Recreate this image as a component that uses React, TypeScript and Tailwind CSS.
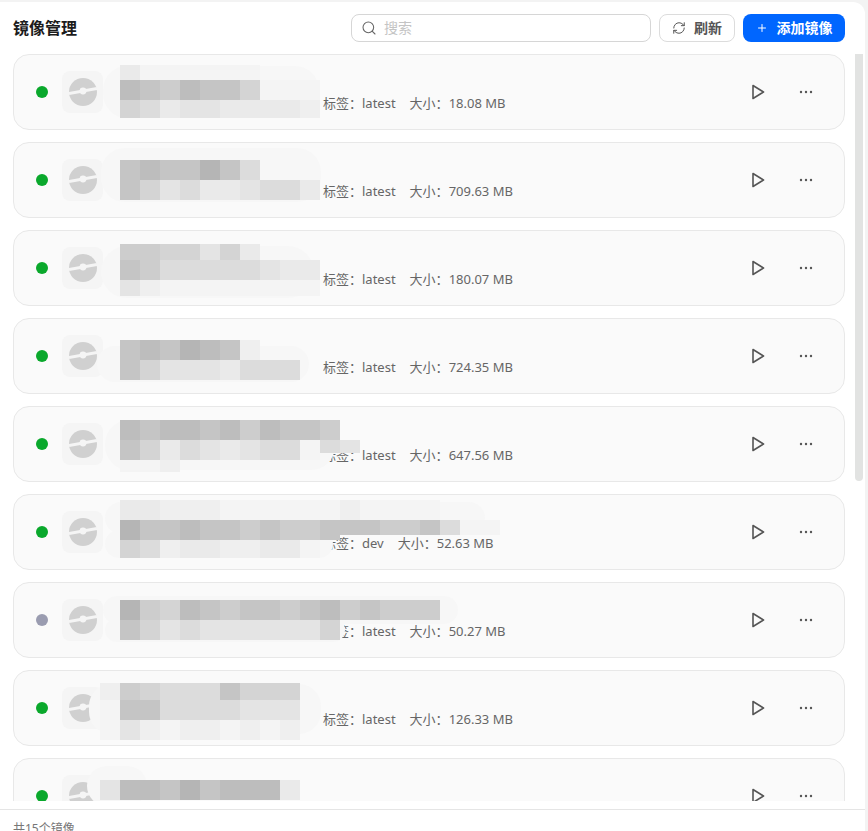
import { Plus, RefreshCw, Search } from 'lucide-react';

const FONT = 'font-["Noto_Sans","Noto_Sans_CJK_SC",sans-serif]';

// mosaic shades, one letter per 20px block
const SHADE: Record<string, string> = {
  a: 'bg-[#b5b5b5]',
  b: 'bg-[#bdbdbd]',
  c: 'bg-[#c5c5c5]',
  d: 'bg-[#cdcdcd]',
  e: 'bg-[#d4d4d4]',
  f: 'bg-[#dcdcdc]',
  g: 'bg-[#e4e4e4]',
  h: 'bg-[#eaeaea]',
  i: 'bg-[#efefef]',
  j: 'bg-[#f4f4f4]',
};

type Strip = { h: string; top: string; left: string; cells: string };

type Row = {
  tag?: string;
  size?: string;
  off?: boolean;
  smudges: string[];
  strips: Strip[];
};

const strip = (top: string, left: string, h: string, cells: string): Strip => ({ top, left, h, cells });

const ROWS: Row[] = [
  {
    tag: 'latest', size: '18.08 MB',
    smudges: ['left-[89px] top-[11px] w-[216px] h-[52px] rounded-[24px]'],
    strips: [
      strip('top-[10px]', 'left-[106px]', 'h-[15px]', 'hjjjjjj'),
      strip('top-[25px]', 'left-[106px]', 'h-5', 'bcdbccejjj'),
      strip('top-[45px]', 'left-[106px]', 'h-[18px]', 'efhgghhhhi'),
    ],
  },
  {
    tag: 'latest', size: '709.63 MB',
    smudges: ['left-[87px] top-[5px] w-[220px] h-[54px] rounded-[24px]'],
    strips: [
      strip('top-[17px]', 'left-[106px]', 'h-5', 'cbccacf'),
      strip('top-[37px]', 'left-[106px]', 'h-5', 'cegfhhgffh'),
    ],
  },
  {
    tag: 'latest', size: '180.07 MB',
    smudges: ['left-[87px] top-[15px] w-[213px] h-[52px] rounded-[26px]'],
    strips: [
      strip('top-[13px]', 'left-[106px]', 'h-4', 'ddeegeh'),
      strip('top-[29px]', 'left-[106px]', 'h-5', 'cdfffffghh'),
      strip('top-[49px]', 'left-[106px]', 'h-[16px]', 'gijjjjjjjj'),
    ],
  },
  {
    tag: 'latest', size: '724.35 MB',
    smudges: ['left-[83px] top-[27px] w-[212px] h-[36px] rounded-[18px]'],
    strips: [
      strip('top-[21px]', 'left-[106px]', 'h-5', 'cbcabci'),
      strip('top-[41px]', 'left-[106px]', 'h-5', 'ceggghfff'),
    ],
  },
  {
    tag: 'latest', size: '647.56 MB',
    smudges: ['left-[91px] top-[13px] w-[230px] h-[50px] rounded-[24px]'],
    strips: [
      strip('top-[13px]', 'left-[106px]', 'h-5', 'bcbbcbdbccd'),
      strip('top-[33px]', 'left-[106px]', 'h-5', 'cehfghgffj'),
      strip('top-[33px]', 'left-[306px]', 'h-[13px]', 'fg'),
      strip('top-[53px]', 'left-[106px]', 'h-[12px]', 'jji'),
    ],
  },
  {
    tag: 'dev', size: '52.63 MB',
    smudges: [
      'left-[91px] top-[7px] w-[380px] h-[32px] rounded-[16px]',
      'left-[91px] top-[35px] w-[228px] h-[28px] rounded-[14px]',
    ],
    strips: [
      strip('top-[5px]', 'left-[106px]', 'h-5', 'hhiiijjjjjjijjjj'),
      strip('top-[25px]', 'left-[106px]', 'h-5', 'accbccdcddc'),
      strip('top-[25px]', 'left-[326px]', 'h-[15px]', 'ccddcfjj'),
      strip('top-[45px]', 'left-[106px]', 'h-[18px]', 'efihhiihhj'),
    ],
  },
  {
    tag: 'latest', size: '50.27 MB', off: true,
    smudges: [
      'left-[89px] top-[13px] w-[355px] h-[28px] rounded-[14px]',
      'left-[91px] top-[35px] w-[240px] h-[24px] rounded-[12px]',
    ],
    strips: [
      strip('top-[17px]', 'left-[106px]', 'h-5', 'adebcdccdcbdcddd'),
      strip('top-[37px]', 'left-[106px]', 'h-5', 'cegfgggggge'),
    ],
  },
  {
    tag: 'latest', size: '126.33 MB',
    smudges: ['left-[75px] top-[13px] w-[232px] h-[50px] rounded-[22px]'],
    strips: [
      strip('top-[12px]', 'left-[86px]', 'h-[17px]', 'idefffceee'),
      strip('top-[29px]', 'left-[86px]', 'h-5', 'jccffffggg'),
      strip('top-[49px]', 'left-[86px]', 'h-5', 'jgijiijiji'),
    ],
  },
  {
    smudges: ['left-[73px] top-[7px] w-[60px] h-[40px] rounded-[24px]'],
    strips: [strip('top-[21px]', 'left-[86px]', 'h-5', 'gbbcacbbbh')],
  },
];

function Disc() {
  return (
    <svg width="28" height="28" viewBox="0 0 28 28">
      <circle cx="14" cy="14" r="14" fill="#d0d0d0" />
      <path d="M0 15.5 28 10.5" stroke="#f5f5f5" strokeWidth="2.8" />
      <circle cx="14" cy="13" r="3.4" fill="#f5f5f5" />
    </svg>
  );
}

function PlayIcon() {
  return (
    <svg width="14" height="16" viewBox="0 0 14 16" fill="none" stroke="#555" strokeWidth="1.6" strokeLinejoin="round">
      <path d="M2 1.5 12.5 8 2 14.5Z" />
    </svg>
  );
}

function DotsIcon() {
  return (
    <svg width="14" height="4" viewBox="0 0 14 4" fill="#555">
      <circle cx="2" cy="2" r="1.2" />
      <circle cx="7" cy="2" r="1.2" />
      <circle cx="12" cy="2" r="1.2" />
    </svg>
  );
}

function ImageCard({ row }: { row: Row }) {
  return (
    <div className="relative flex h-[76px] shrink-0 items-center rounded-2xl border border-[#e8e8e8] bg-[#fafafa] pl-[22px] pr-[31px]">
      <span className={`h-3 w-3 rounded-full ${row.off ? 'bg-[#9a9cb0]' : 'bg-[#0aa82c]'}`} />
      <div className="ml-[14px] flex h-[42px] w-[41px] items-center justify-center rounded-lg bg-[#f5f5f5]">
        <Disc />
      </div>
      <div className="ml-[220px] mt-6 flex flex-1 gap-[14px] text-[13px] text-[#666]">
        {row.tag && <span>标签：{row.tag}</span>}
        {row.size && <span>大小：{row.size}</span>}
      </div>
      <div className="flex items-center gap-[34px]">
        <PlayIcon />
        <DotsIcon />
      </div>
      {/* pixelated cover over the image name */}
      {row.smudges.map((cls, i) => (
        <div key={i} className={`absolute bg-[#f7f7f7] ${cls}`} />
      ))}
      {row.strips.map((s, i) => (
        <div key={i} className={`absolute flex ${s.top} ${s.left}`}>
          {s.cells.split('').map((c, j) => (
            <div key={j} className={`w-5 ${s.h} ${SHADE[c]}`} />
          ))}
        </div>
      ))}
    </div>
  );
}

export default function App() {
  return (
    <div className={`flex h-[831px] w-[868px] flex-col overflow-hidden bg-[#f3f3f3] pt-[2px] pr-[3px] ${FONT}`}>
      <div className="flex min-h-0 flex-1 flex-col rounded-tr-xl bg-white">
        <header className="flex h-[52px] shrink-0 items-start pl-[13px] pr-[20px] pt-[12px]">
          <h1 className="flex h-7 items-center text-base font-bold text-[#1c1c1c]">镜像管理</h1>
          <div className="ml-auto flex h-7 gap-2">
            <div className="flex w-[300px] items-center gap-[7px] rounded-lg border border-[#d6d6d6] bg-white pl-[9px]">
              <Search size={16} strokeWidth={1.6} className="text-[#666]" />
              <span className="text-sm text-[#c4c4c4]">搜索</span>
            </div>
            <button className="flex w-[76px] items-center justify-center gap-2 rounded-lg border border-[#dcdcdc] bg-white text-sm font-bold text-[#555]">
              <RefreshCw size={14} strokeWidth={1.7} />
              刷新
            </button>
            <button className="flex w-[102px] items-center justify-center gap-[9px] rounded-lg bg-[#0066ff] text-sm font-bold text-white">
              <Plus size={12} strokeWidth={2} />
              添加镜像
            </button>
          </div>
        </header>
        <div className="flex min-h-0 flex-1 items-start pl-[13px]">
          <div className="flex h-[747px] w-[832px] flex-col gap-3 overflow-hidden">
            {ROWS.map((row, i) => (
              <ImageCard key={i} row={row} />
            ))}
          </div>
          <div className="ml-[10px] h-[427px] w-2 rounded-b-full rounded-t-md bg-[#e2e3e2]" />
        </div>
        <footer className="h-[22px] shrink-0 border-t border-[#e5e5e5] pl-[13px] pt-[9px] text-xs leading-5 text-[#777]">
          共15个镜像
        </footer>
      </div>
    </div>
  );
}
